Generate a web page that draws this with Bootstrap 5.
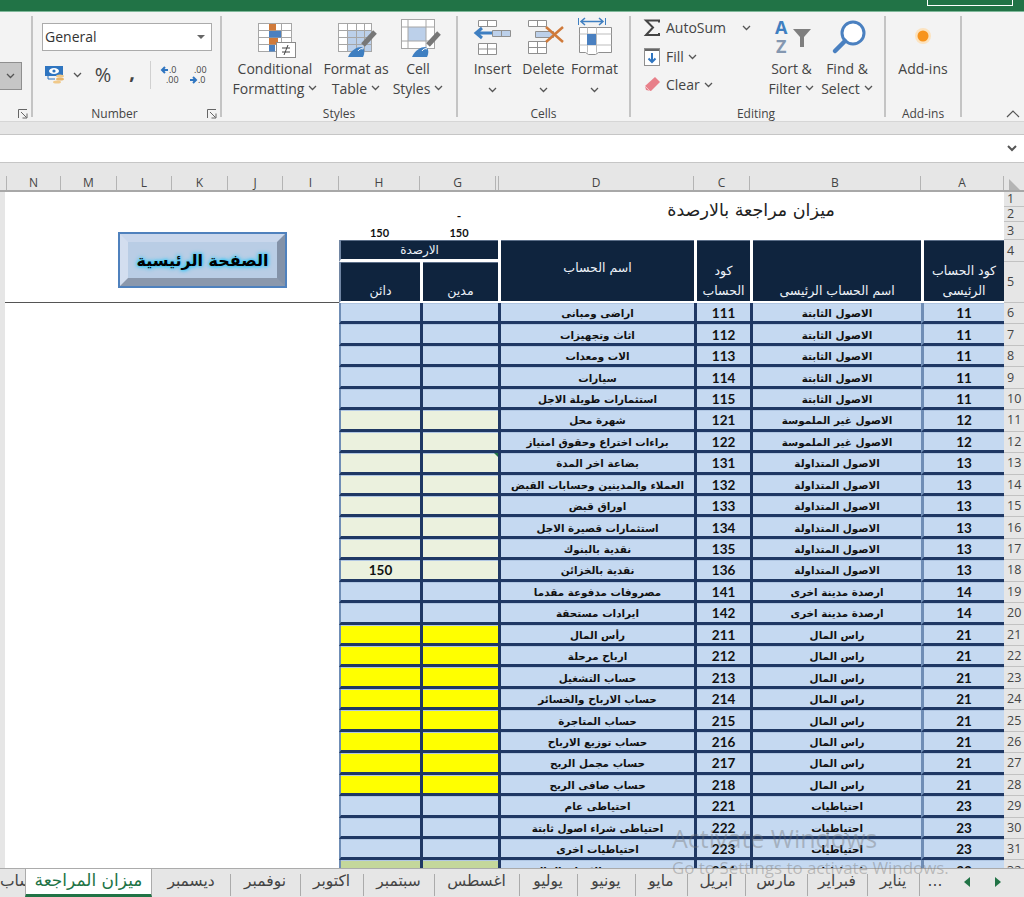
<!DOCTYPE html>
<html lang="en">
<head>
<meta charset="utf-8">
<title>ميزان المراجعة</title>
<link href="https://cdn.jsdelivr.net/npm/bootstrap@5.3.0/dist/css/bootstrap.min.css" rel="stylesheet">
<style>
html,body{height:897px;overflow:hidden;background:#e6e6e6}
body{font-family:"Open Sans","Liberation Sans",sans-serif;color:#444;position:relative}
.titlebar{height:12px;background:#217346;border-bottom:1px solid #7fb89a;padding-right:11px}
.winbtn{width:86px;height:6px;border:1px solid #fff;border-top:0}
.ribbon{height:110px;background:#f3f3f3;border-bottom:1px solid #d6d6d6}
.rgroup{height:101px;margin-top:4px;border-right:2px solid #c4c4c4;position:relative}
.g0{width:33px}.g1{width:189px}.g2{width:236px}.g3{width:173px}.g4{width:255px}.g5{width:76px}
.rbody{min-height:0}
.rlabel{font-size:12px;line-height:16px;text-align:center;margin-bottom:-5px;color:#444}
.g1 .rlabel{padding-right:24px}
.g4 .rlabel{padding-right:3px}
.launch{position:absolute;right:3px;bottom:-2px;width:10px;height:10px}
.greybtn{width:22px;height:28px;margin-top:46px;background:#c6c6c6;border:1px solid #8f8f8f;border-left:0}
.g1 .rbody{padding:7px 0 0 9px}
.numsel{width:170px;height:28px;background:#fff;border:1px solid #ababab;font-size:14px;line-height:26px;padding:0 6px 0 2px;color:#333}
.numrow{display:grid;grid-template-columns:26px 18px 34px 24px 12px 27px 30px;height:30px;margin-top:9px}
.numrow>*{justify-self:center;align-self:center}
.pct{font-size:20px;line-height:1}
.comma{font-size:20px;font-weight:700;line-height:1;margin-top:-6px}
.nsep{width:1px;height:28px;background:#d0d0d0}
.g2 .rbody{padding:4px 0 0 11px}
.g3 .rbody,.g4 .rbody,.g5 .rbody{padding-top:4px}
.g3 .rbody{padding-left:9px}
.bigbtn{font-size:14px;line-height:19.5px;text-align:center;white-space:nowrap;color:#444}
.bigbtn svg.ic{display:block;width:44px;height:38px;overflow:visible;margin-bottom:1px}
.b-cf{width:84px}.b-ft{width:78px}.b-cs{width:46px}.b-cell{width:51px}
.smallcol{width:133px;padding:0 13px;margin-top:-6px}
.smallrow{height:28.5px;font-size:14px;line-height:1;white-space:nowrap}
.smallrow svg.si{width:18px;height:18px;margin-right:4px;flex:none;overflow:visible}
.b-sort{width:55px}.b-find{width:56px}
.g5 .bigbtn{width:74px}
.chev{width:9px;height:6px;flex:none;vertical-align:middle}
.collapse-ic{position:absolute;right:4px;top:98px;width:14px;height:8px}
.gapstrip{height:12px;background:#e6e6e6}
.fxbar{height:29px;background:#fff;border-top:1px solid #c6c6c6;border-bottom:1px solid #c6c6c6;padding-right:7px}
.colgap{height:13px}
.colhead{height:16px;display:grid;grid-template-columns:7px 54px 56px 55px 56px 55px 56px 81px 76px 3px 195px 56px 171px 83px 20px;background:#e6e6e6;border-bottom:2px solid #a8a8a8;font-size:12px;line-height:14px;color:#444}
.colhead>span{text-align:center;border-right:1px solid #b4b4b4}
.colhead>span.lastc{border-right:0;display:flex;align-items:flex-end;justify-content:center}
.sheetwrap{height:676px;overflow:hidden;padding-left:5px}
.xl{table-layout:fixed;width:1023px;border-collapse:separate;border-spacing:0;background:#fff;font-family:"DejaVu Sans",sans-serif}
.cw-rh{width:24px}.cw-a{width:83px}.cw-b{width:171px}.cw-c{width:56px}.cw-d{width:196px}.cw-g{width:78px}.cw-h{width:81px}.cw-x{width:334px}
.xl td{padding:0;overflow:hidden;white-space:nowrap;text-align:center;vertical-align:middle;line-height:12px}
.r1{height:15px}.r2{height:15px}.r3{height:18px}.r4{height:22px}.r5{height:41px}.rd{height:21.44px}
.xl td.rh{background:#e6e6e6;border-bottom:1px solid #c2c2c2;box-shadow:inset -1px 0 0 #f6f6f6;font-family:"Open Sans",sans-serif;font-size:12.5px;color:#444;text-align:left;padding-left:3px;direction:ltr}
.xl td.ttl{font-size:17.5px;color:#222;padding-bottom:12px}
.xl td.tot{font:700 11px/14px "Lato",sans-serif;color:#111;vertical-align:bottom}
.xl td.dash{font:700 12px/12px "Lato",sans-serif;color:#111;vertical-align:bottom}
.xl td.blanktop{border-bottom:1px solid #555;vertical-align:top}
.xl td.hd{background:#0f243e;color:#edf2f8;font-size:12.5px;font-weight:400;border-left:3px solid #fff;border-bottom:2px solid #fff;vertical-align:bottom;line-height:20px;white-space:normal;box-shadow:inset 0 1px 0 #5c6f89}
.xl td.hd.mid{vertical-align:middle;padding-bottom:6px}
.xl td.hd.row4{vertical-align:middle;line-height:18px;font-size:12px;border-bottom:3px solid #fff}
.xl td.hd.edgeH{border-left:2px solid #7186a3}
.xl td.c{background:#c5d9f1;border-bottom:3px solid #1f3864;border-left:3px solid #1f3864;font-weight:700;font-size:10.4px;color:#111;line-height:14px;padding-top:2px;box-shadow:inset 0 1px 0 #b0c6e2}
.xl td.c.n{font:700 13.5px/14px "Lato",sans-serif}
.xl td.c.fA{border-left-color:#6f8db5}
.xl td.c.edgeH{border-left:2px solid #6f8db5}
.xl td.c.cream{background:#ebf1de}
.xl td.c.yel{background:#ff0}
.xl td.c.grn{background:#c4d79b}
.tricell{position:relative}
.tricell::after{content:"";position:absolute;top:0;right:0;border-top:4px solid #217346;border-left:4px solid transparent}
.homebtn{width:169px;height:56px;margin:40px 52px 0 auto;background:#b9cde5;border:2px solid #4f81bd}
.homebev{height:100%;border-style:solid;border-width:8px;border-color:#c9d7ec #8392a8 #8b98ac #d3deef;font:700 16px "DejaVu Sans",sans-serif;color:#000;text-shadow:0 0 3px #2fc4f5,0 0 4px #2fc4f5,0 0 5px #5ed2f7}
.tabbar{height:29px;display:grid;grid-template-columns:25px 127px 78px 70px 63px 71px 85px 58px 58px 52px 58px 62px 60px 52px 32px 32px 30px 11px;background:#e6e6e6;border-top:1px solid #ababab;font-family:"DejaVu Sans",sans-serif;font-size:15.5px;color:#444;overflow:hidden}
.stab{display:flex;align-items:center;justify-content:center;white-space:nowrap;overflow:hidden;padding-bottom:3px;background:linear-gradient(#ababab,#ababab) left 5px/1px 22px no-repeat}
.stab.first{justify-content:flex-end;background:none}
.stab.active{background:#fff;color:#217346;font-size:17px;border-left:1px solid #ababab;border-right:1px solid #ababab;border-bottom:3px solid #217346;margin-top:-1px;padding-bottom:1px}
.stab.active+.stab{background:none}
.stab.plain{background:none}
.wm{position:absolute;left:672px;top:823px;pointer-events:none;color:rgba(110,110,110,.38);font-family:"Open Sans",sans-serif;white-space:nowrap}
.wm1{font-size:25px;line-height:30px}
.wm2{font-size:16.9px;line-height:20px;margin-top:5px}
</style>
</head>
<body>
<svg width="0" height="0" class="d-block position-absolute">
  <symbol id="chv" viewBox="0 0 9 6"><path d="M1 1l3.500 3.500L8 1" fill="none" stroke="#555" stroke-width="1.300"/></symbol>
  <symbol id="lnch" viewBox="0 0 10 10"><path d="M.5 9V.5H9M3 3l5.500 5.500M9 4.500V9H4.500" fill="none" stroke="#666" stroke-width="1"/></symbol>
</svg>

<div class="titlebar d-flex justify-content-end"><div class="winbtn"></div></div>

<div class="ribbon d-flex position-relative">
  <div class="rgroup g0"><div class="greybtn d-flex align-items-center justify-content-center"><svg class="chev"><use href="#chv"/></svg></div><svg class="launch"><use href="#lnch"/></svg></div>

  <div class="rgroup g1 d-flex flex-column">
    <div class="rbody flex-grow-1">
      <div class="numsel d-flex align-items-center justify-content-between"><span>General</span><svg width="8" height="4"><path d="M0 0h8L4 4z" fill="#666"/></svg></div>
      <div class="numrow">
        <svg width="20" height="20" viewBox="0 0 20 20"><rect x="0" y="1" width="18" height="10" fill="#2f75c0"/><ellipse cx="9" cy="6" rx="5" ry="3" fill="#fff"/><circle cx="9" cy="6" r="1.600" fill="#2f75c0"/><path d="M3 11v3h7" fill="none" stroke="#2f75c0"/><ellipse cx="15" cy="11" rx="4" ry="1.600" fill="#f0c98a"/><ellipse cx="15" cy="14" rx="4" ry="1.600" fill="#e8b56a"/><ellipse cx="12" cy="17" rx="4" ry="1.600" fill="#f0c98a"/></svg>
        <svg class="chev"><use href="#chv"/></svg>
        <span class="pct">%</span>
        <span class="comma">,</span>
        <span class="nsep"></span>
        <svg width="20" height="20" viewBox="0 0 20 20" font-family="Open Sans" font-size="9" fill="#444"><path d="M8 5H2M5 2L2 5l3 3" fill="none" stroke="#2f75c0" stroke-width="2"/><text x="9" y="8">.0</text><text x="6" y="18">.00</text></svg>
        <svg width="20" height="20" viewBox="0 0 20 20" font-family="Open Sans" font-size="9" fill="#444"><text x="6" y="8">.00</text><path d="M2 15h6M5 12l3 3-3 3" fill="none" stroke="#2f75c0" stroke-width="2"/><text x="10" y="18">.0</text></svg>
      </div>
    </div>
    <div class="rlabel">Number</div>
    <svg class="launch"><use href="#lnch"/></svg>
  </div>

  <div class="rgroup g2 d-flex flex-column">
    <div class="rbody flex-grow-1 d-flex">
      <div class="bigbtn b-cf d-flex flex-column align-items-center">
        <svg class="ic" viewBox="0 0 44 38"><rect x="5.500" y="3.500" width="33" height="28" fill="#fff" stroke="#a6a6a6"/><path d="M5.500 10.500h33M5.500 17.500h33M5.500 24.500h33M16.500 3.500v28M28.500 3.500v28" stroke="#a6a6a6" fill="none"/><rect x="16" y="4" width="7" height="6.500" fill="#d07a3a"/><rect x="16" y="11" width="12" height="6.500" fill="#4a80c0"/><rect x="16" y="18" width="9" height="6.500" fill="#d07a3a"/><rect x="16" y="25" width="6" height="6.500" fill="#4a80c0"/><rect x="23.500" y="22.500" width="19" height="15" fill="#fff" stroke="#8a8a8a"/><path d="M29 28h8M29 32h8M31 35l4-10" stroke="#444" fill="none"/></svg>
        <span>Conditional</span>
        <span class="d-flex align-items-center gap-1">Formatting<svg class="chev"><use href="#chv"/></svg></span>
      </div>
      <div class="bigbtn b-ft d-flex flex-column align-items-center">
        <svg class="ic" viewBox="0 0 44 38"><rect x="4.500" y="3.500" width="33" height="28" fill="#fff" stroke="#a6a6a6"/><rect x="13" y="10" width="24" height="21" fill="#bcd0ea"/><path d="M4.500 10.500h33M4.500 17.500h33M4.500 24.500h33M13.500 3.500v28M22.500 3.500v28M30.500 3.500v28" stroke="#a6a6a6" fill="none"/><path d="M41 12L29 25" stroke="#777" stroke-width="5"/><path d="M14 37c3-7 9-10 13-10 4 1 4 6 2 10z" fill="#3f7fc1"/><path d="M24 31c1-2 4-3 5-2" stroke="#fff" fill="none"/></svg>
        <span>Format as</span>
        <span class="d-flex align-items-center gap-1">Table<svg class="chev"><use href="#chv"/></svg></span>
      </div>
      <div class="bigbtn b-cs d-flex flex-column align-items-center">
        <svg class="ic" viewBox="0 0 44 38"><rect x="5.500" y="-.5" width="33" height="29" fill="#fff" stroke="#a6a6a6"/><rect x="12" y="7" width="18" height="14" fill="#bcd0ea"/><path d="M5.500 7h33M5.500 21h33M12 -.5v29M30 -.5v29" stroke="#a6a6a6" fill="none"/><path d="M43 13L32 25" stroke="#777" stroke-width="5"/><path d="M16 37c3-7 9-10 13-10 4 1 4 6 2 10z" fill="#3f7fc1"/><path d="M26 31c1-2 4-3 5-2" stroke="#fff" fill="none"/></svg>
        <span>Cell</span>
        <span class="d-flex align-items-center gap-1">Styles<svg class="chev"><use href="#chv"/></svg></span>
      </div>
    </div>
    <div class="rlabel">Styles</div>
  </div>

  <div class="rgroup g3 d-flex flex-column">
    <div class="rbody flex-grow-1 d-flex">
      <div class="bigbtn b-cell d-flex flex-column align-items-center">
        <svg class="ic" viewBox="0 0 44 38"><path d="M7.500 .5h18v6h-18zM16.500 .5v6M7.500 23.500h18v11h-18zM7.500 29h18M16.500 23.500v11" fill="#fff" stroke="#8f8f8f"/><path d="M21 13H6M11 8l-6 5 6 5" fill="none" stroke="#3f7fc1" stroke-width="3"/><path d="M21.500 10.500h18v6h-18z" fill="#bcd0ea" stroke="#8f8f8f"/><path d="M30.500 10.500v6" stroke="#8f8f8f"/></svg>
        <span>Insert</span>
        <svg class="chev mt-2"><use href="#chv"/></svg>
      </div>
      <div class="bigbtn b-cell d-flex flex-column align-items-center">
        <svg class="ic" viewBox="0 0 44 38"><path d="M6.500 .5h18v6h-18zM15.500 .5v6M6.500 21.500h18v12h-18zM6.500 27.500h18M15.500 21.500v12" fill="#fff" stroke="#8f8f8f"/><path d="M13.500 11.500h18v6h-18z" fill="#bcd0ea" stroke="#8f8f8f"/><path d="M24 7l17 15M41 7L24 22" stroke="#d07a3a" stroke-width="2.500" fill="none"/></svg>
        <span>Delete</span>
        <svg class="chev mt-2"><use href="#chv"/></svg>
      </div>
      <div class="bigbtn b-cell d-flex flex-column align-items-center">
        <svg class="ic" viewBox="0 0 44 38"><path d="M5.500 -2v7M32.500 -2v7" stroke="#3f7fc1" fill="none"/><path d="M8 1.500h22M12 -2L8 1.500 12 5M26 -2l4 3.500L26 5" stroke="#3f7fc1" stroke-width="1.500" fill="none"/><path d="M6.500 7.500h32v25h-13l-3 2h-7l-3-2h-6z" fill="#fff" stroke="#8f8f8f"/><path d="M6.500 14h32M6.500 25h32M14.500 7.500v25M23.500 7.500v25" stroke="#bdbdbd" fill="none"/><rect x="14" y="14" width="9" height="11" fill="#4a80c0"/></svg>
        <span>Format</span>
        <svg class="chev mt-2"><use href="#chv"/></svg>
      </div>
    </div>
    <div class="rlabel">Cells</div>
  </div>

  <div class="rgroup g4 d-flex flex-column">
    <div class="rbody flex-grow-1 d-flex">
      <div class="smallcol">
        <div class="smallrow d-flex align-items-center"><svg class="si" viewBox="0 0 18 18"><path d="M15 3.500V1.500H2l7 7-7 7.500h13v-2" fill="none" stroke="#444" stroke-width="2"/></svg><span>AutoSum</span><svg class="chev ms-auto"><use href="#chv"/></svg></div>
        <div class="smallrow d-flex align-items-center"><svg class="si" viewBox="0 0 18 18"><rect x=".5" y=".5" width="15" height="17" fill="#fff" stroke="#8f8f8f"/><rect x="1" y="1" width="14" height="2" fill="#666"/><path d="M8 5v9M4.500 10.500L8 14l3.500-3.500" fill="none" stroke="#2f75c0" stroke-width="2"/></svg><span>Fill</span><svg class="chev ms-1"><use href="#chv"/></svg></div>
        <div class="smallrow d-flex align-items-center"><svg class="si" viewBox="0 0 18 18"><path d="M11 1l5 5-9 9-5-1-1-4z" fill="#e8808a"/><path d="M1 10l5 5" stroke="#f3c4c8"/></svg><span>Clear</span><svg class="chev ms-1"><use href="#chv"/></svg></div>
      </div>
      <div class="bigbtn b-sort d-flex flex-column align-items-center">
        <svg class="ic" viewBox="0 0 44 38" font-family="Open Sans" font-weight="700"><text x="5" y="14" font-size="18" fill="#3f7fc1">A</text><text x="6" y="33" font-size="18" fill="#8497b0">Z</text><path d="M23 9h18l-7 8v10h-4V17z" fill="#7f7f7f"/></svg>
        <span>Sort &amp;</span>
        <span class="d-flex align-items-center gap-1">Filter<svg class="chev"><use href="#chv"/></svg></span>
      </div>
      <div class="bigbtn b-find d-flex flex-column align-items-center">
        <svg class="ic" viewBox="0 0 44 38"><circle cx="28" cy="13" r="11" fill="#fff" stroke="#4a80c0" stroke-width="3"/><path d="M20 21L10 31" stroke="#4a80c0" stroke-width="4.500" stroke-linecap="round"/></svg>
        <span>Find &amp;</span>
        <span class="d-flex align-items-center gap-1">Select<svg class="chev"><use href="#chv"/></svg></span>
      </div>
    </div>
    <div class="rlabel">Editing</div>
  </div>

  <div class="rgroup g5 d-flex flex-column">
    <div class="rbody flex-grow-1 d-flex">
      <div class="bigbtn d-flex flex-column align-items-center">
        <svg class="ic" viewBox="0 0 44 38"><circle cx="22" cy="16" r="8" fill="#fce3c0"/><circle cx="22" cy="16" r="5.500" fill="#f7941d"/></svg>
        <span>Add-ins</span>
      </div>
    </div>
    <div class="rlabel">Add-ins</div>
  </div>
  <svg class="collapse-ic" viewBox="0 0 14 8"><path d="M1 7l6-6 6 6" fill="none" stroke="#555" stroke-width="1.200"/></svg>
</div>

<div class="gapstrip"></div>
<div class="fxbar d-flex align-items-center justify-content-end"><svg width="10" height="7"><path d="M1 1l4 4 4-4" fill="none" stroke="#555" stroke-width="2"/></svg></div>
<div class="colgap"></div>
<div class="colhead">
  <span></span><span>N</span><span>M</span><span>L</span><span>K</span><span>J</span><span>I</span><span>H</span><span>G</span><span></span><span>D</span><span>C</span><span>B</span><span>A</span>
  <span class="lastc"><svg width="11" height="11"><path d="M11 11H0V0z" fill="#b4b4b4"/></svg></span>
</div>

<div class="sheetwrap">
<table class="xl" dir="rtl">
<colgroup><col class="cw-rh"><col class="cw-a"><col class="cw-b"><col class="cw-c"><col class="cw-d"><col class="cw-g"><col class="cw-h"><col class="cw-x"></colgroup>
<tbody>
<tr class="r1"><td class="rh">1</td><td class="ttl" colspan="4" rowspan="3">ميزان مراجعة بالارصدة</td><td></td><td></td><td class="blanktop" rowspan="5"><div class="homebtn"><div class="homebev d-flex align-items-center justify-content-center">الصفحة الرئيسية</div></div></td></tr>
<tr class="r2"><td class="rh">2</td><td class="dash">-</td><td></td></tr>
<tr class="r3"><td class="rh">3</td><td class="tot">150</td><td class="tot">150</td></tr>
<tr class="r4"><td class="rh">4</td><td class="hd" rowspan="2">كود الحساب الرئيسى</td><td class="hd" rowspan="2">اسم الحساب الرئيسى</td><td class="hd" rowspan="2">كود الحساب</td><td class="hd mid" rowspan="2">اسم الحساب</td><td class="hd row4 edgeH" colspan="2">الارصدة</td></tr>
<tr class="r5"><td class="rh">5</td><td class="hd">مدين</td><td class="hd edgeH">دائن</td></tr>
<tr class="rd"><td class="rh">6</td><td class="c n fA">11</td><td class="c">الاصول الثابتة</td><td class="c n">111</td><td class="c">اراضى ومبانى</td><td class="c"></td><td class="c edgeH"></td><td rowspan="27"></td></tr>
<tr class="rd"><td class="rh">7</td><td class="c n fA">11</td><td class="c">الاصول الثابتة</td><td class="c n">112</td><td class="c">اثاث وتجهيزات</td><td class="c"></td><td class="c edgeH"></td></tr>
<tr class="rd"><td class="rh">8</td><td class="c n fA">11</td><td class="c">الاصول الثابتة</td><td class="c n">113</td><td class="c">الات ومعدات</td><td class="c"></td><td class="c edgeH"></td></tr>
<tr class="rd"><td class="rh">9</td><td class="c n fA">11</td><td class="c">الاصول الثابتة</td><td class="c n">114</td><td class="c">سيارات</td><td class="c"></td><td class="c edgeH"></td></tr>
<tr class="rd"><td class="rh">10</td><td class="c n fA">11</td><td class="c">الاصول الثابتة</td><td class="c n">115</td><td class="c">استثمارات طويلة الاجل</td><td class="c"></td><td class="c edgeH"></td></tr>
<tr class="rd"><td class="rh">11</td><td class="c n fA">12</td><td class="c">الاصول غير الملموسة</td><td class="c n">121</td><td class="c">شهرة محل</td><td class="c cream"></td><td class="c cream edgeH"></td></tr>
<tr class="rd"><td class="rh">12</td><td class="c n fA">12</td><td class="c">الاصول غير الملموسة</td><td class="c n">122</td><td class="c">براءات اختراع وحقوق امتياز</td><td class="c cream"></td><td class="c cream edgeH"></td></tr>
<tr class="rd"><td class="rh">13</td><td class="c n fA">13</td><td class="c">الاصول المتداولة</td><td class="c n">131</td><td class="c">بضاعة اخر المدة</td><td class="c cream tricell"></td><td class="c cream edgeH"></td></tr>
<tr class="rd"><td class="rh">14</td><td class="c n fA">13</td><td class="c">الاصول المتداولة</td><td class="c n">132</td><td class="c">العملاء والمدينين وحسابات القبض</td><td class="c cream"></td><td class="c cream edgeH"></td></tr>
<tr class="rd"><td class="rh">15</td><td class="c n fA">13</td><td class="c">الاصول المتداولة</td><td class="c n">133</td><td class="c">اوراق قبض</td><td class="c cream"></td><td class="c cream edgeH"></td></tr>
<tr class="rd"><td class="rh">16</td><td class="c n fA">13</td><td class="c">الاصول المتداولة</td><td class="c n">134</td><td class="c">استثمارات قصيرة الاجل</td><td class="c cream"></td><td class="c cream edgeH"></td></tr>
<tr class="rd"><td class="rh">17</td><td class="c n fA">13</td><td class="c">الاصول المتداولة</td><td class="c n">135</td><td class="c">نقدية بالبنوك</td><td class="c cream"></td><td class="c cream edgeH"></td></tr>
<tr class="rd"><td class="rh">18</td><td class="c n fA">13</td><td class="c">الاصول المتداولة</td><td class="c n">136</td><td class="c">نقدية بالخزائن</td><td class="c cream"></td><td class="c cream n edgeH">150</td></tr>
<tr class="rd"><td class="rh">19</td><td class="c n fA">14</td><td class="c">ارصدة مدينة اخرى</td><td class="c n">141</td><td class="c">مصروفات مدفوعة مقدما</td><td class="c"></td><td class="c edgeH"></td></tr>
<tr class="rd"><td class="rh">20</td><td class="c n fA">14</td><td class="c">ارصدة مدينة اخرى</td><td class="c n">142</td><td class="c">ايرادات مستحقة</td><td class="c"></td><td class="c edgeH"></td></tr>
<tr class="rd"><td class="rh">21</td><td class="c n fA">21</td><td class="c">راس المال</td><td class="c n">211</td><td class="c">رأس المال</td><td class="c yel"></td><td class="c yel edgeH"></td></tr>
<tr class="rd"><td class="rh">22</td><td class="c n fA">21</td><td class="c">راس المال</td><td class="c n">212</td><td class="c">ارباح مرحلة</td><td class="c yel"></td><td class="c yel edgeH"></td></tr>
<tr class="rd"><td class="rh">23</td><td class="c n fA">21</td><td class="c">راس المال</td><td class="c n">213</td><td class="c">حساب التشغيل</td><td class="c yel"></td><td class="c yel edgeH"></td></tr>
<tr class="rd"><td class="rh">24</td><td class="c n fA">21</td><td class="c">راس المال</td><td class="c n">214</td><td class="c">حساب الارباح والخسائر</td><td class="c yel"></td><td class="c yel edgeH"></td></tr>
<tr class="rd"><td class="rh">25</td><td class="c n fA">21</td><td class="c">راس المال</td><td class="c n">215</td><td class="c">حساب المتاجرة</td><td class="c yel"></td><td class="c yel edgeH"></td></tr>
<tr class="rd"><td class="rh">26</td><td class="c n fA">21</td><td class="c">راس المال</td><td class="c n">216</td><td class="c">حساب توزيع الارباح</td><td class="c yel"></td><td class="c yel edgeH"></td></tr>
<tr class="rd"><td class="rh">27</td><td class="c n fA">21</td><td class="c">راس المال</td><td class="c n">217</td><td class="c">حساب مجمل الربح</td><td class="c yel"></td><td class="c yel edgeH"></td></tr>
<tr class="rd"><td class="rh">28</td><td class="c n fA">21</td><td class="c">راس المال</td><td class="c n">218</td><td class="c">حساب صافى الربح</td><td class="c yel"></td><td class="c yel edgeH"></td></tr>
<tr class="rd"><td class="rh">29</td><td class="c n fA">23</td><td class="c">احتياطيات</td><td class="c n">221</td><td class="c">احتياطى عام</td><td class="c"></td><td class="c edgeH"></td></tr>
<tr class="rd"><td class="rh">30</td><td class="c n fA">23</td><td class="c">احتياطيات</td><td class="c n">222</td><td class="c">احتياطى شراء اصول ثابتة</td><td class="c"></td><td class="c edgeH"></td></tr>
<tr class="rd"><td class="rh">31</td><td class="c n fA">23</td><td class="c">احتياطيات</td><td class="c n">223</td><td class="c">احتياطيات اخرى</td><td class="c"></td><td class="c edgeH"></td></tr>
<tr class="rd"><td class="rh">32</td><td class="c n fA">23</td><td class="c">احتياطيات</td><td class="c n">224</td><td class="c">فروق تقييم الاوراق المالية</td><td class="c grn"></td><td class="c grn edgeH"></td></tr>
</tbody>
</table>
</div>

<div class="tabbar">
  <div class="stab first" dir="rtl">حساب</div>
  <div class="stab active">ميزان المراجعة</div>
  <div class="stab">ديسمبر</div>
  <div class="stab">نوفمبر</div>
  <div class="stab">اكتوبر</div>
  <div class="stab">سبتمبر</div>
  <div class="stab">اغسطس</div>
  <div class="stab">يوليو</div>
  <div class="stab">يونيو</div>
  <div class="stab">مايو</div>
  <div class="stab">ابريل</div>
  <div class="stab">مارس</div>
  <div class="stab">فبراير</div>
  <div class="stab">يناير</div>
  <div class="stab">...</div>
  <div class="stab plain"><svg width="6" height="10"><path d="M6 0v10L0 5z" fill="#217346"/></svg></div>
  <div class="stab plain"><svg width="6" height="10"><path d="M0 0v10l6-5z" fill="#217346"/></svg></div>
  <div class="stab plain"></div>
</div>

<div class="wm"><div class="wm1">Activate Windows</div><div class="wm2">Go to Settings to activate Windows.</div></div>

<script src="https://cdn.jsdelivr.net/npm/bootstrap@5.3.0/dist/js/bootstrap.bundle.min.js"></script>
</body>
</html>
